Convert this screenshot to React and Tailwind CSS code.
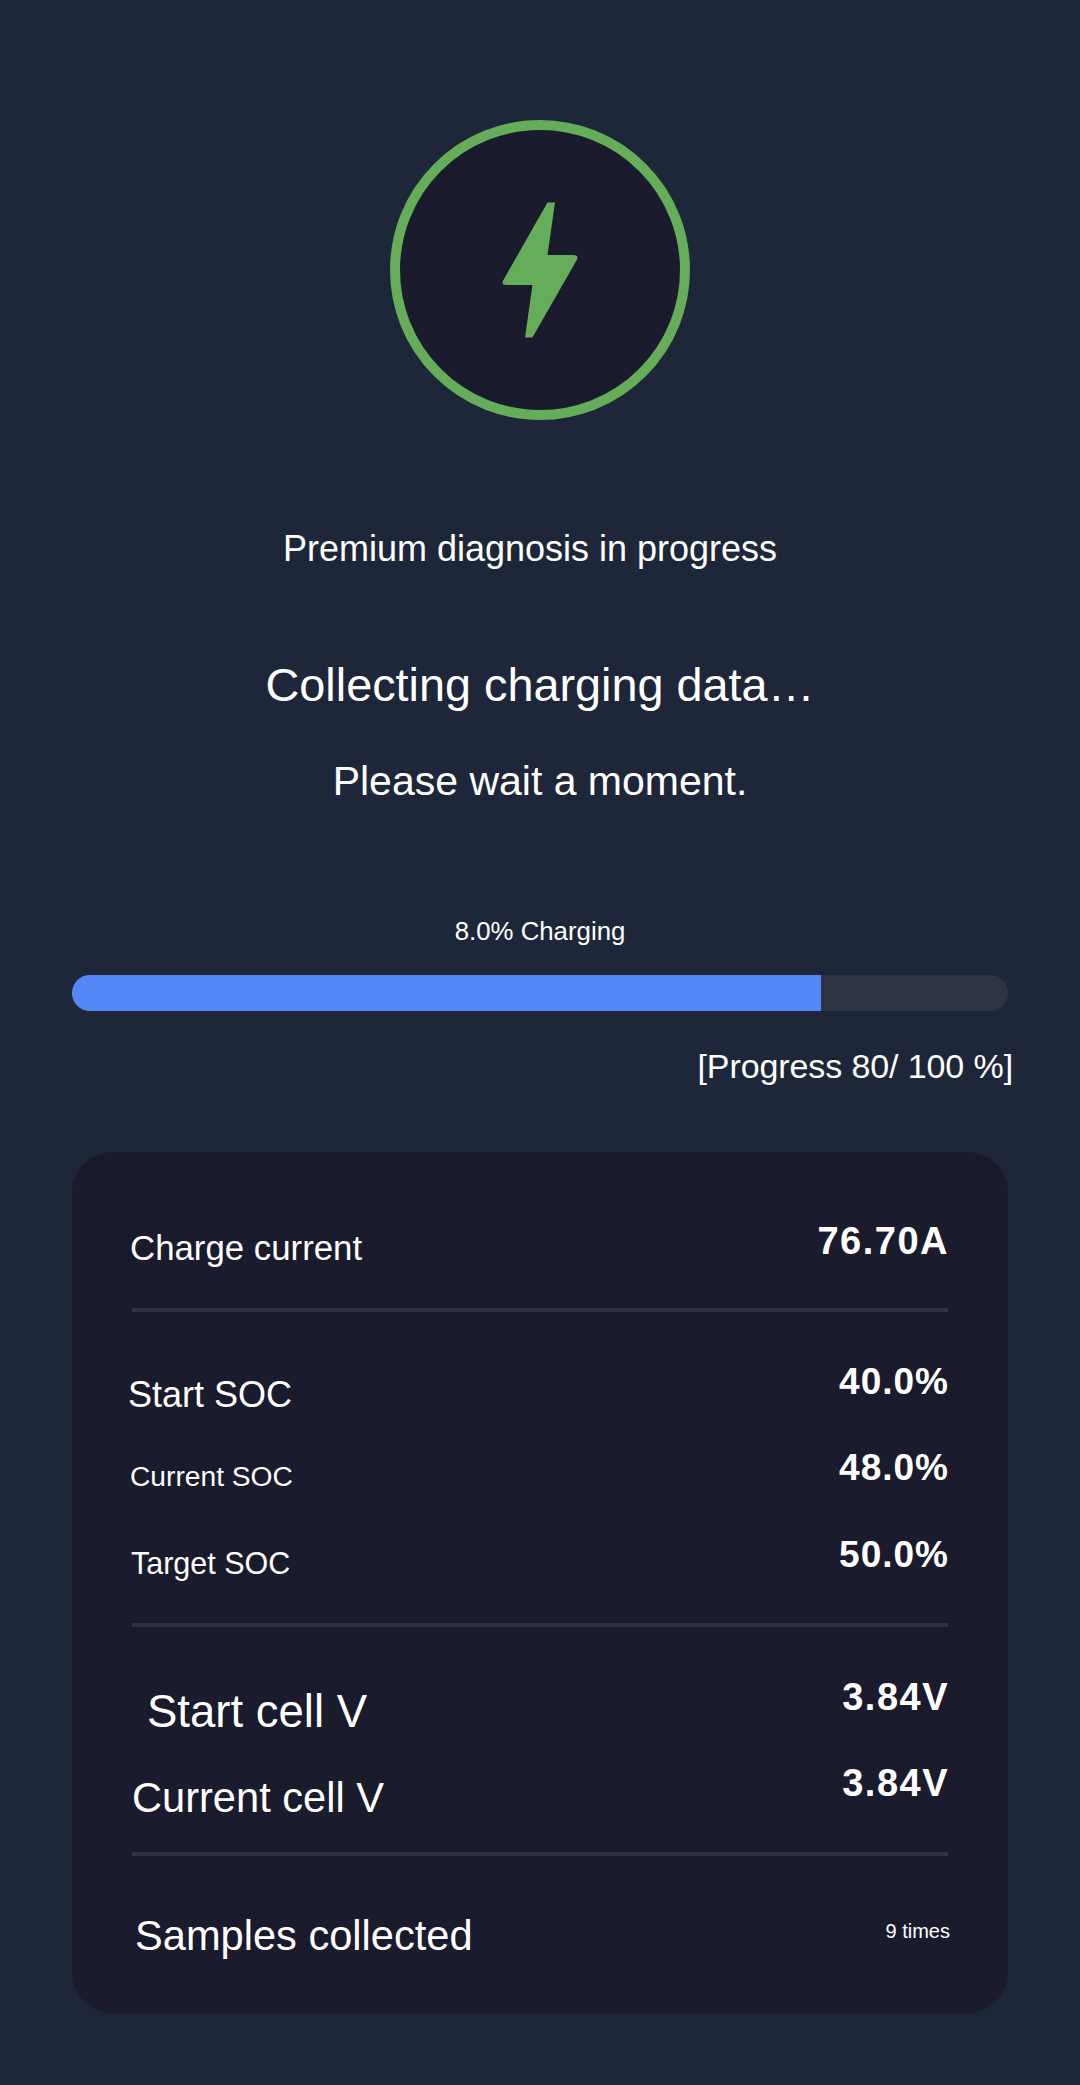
import React from 'react';

const Row = ({ label, value, rowClass, labelClass, valueClass }) => (
  <div className={`flex h-[64px] items-center justify-between ${rowClass}`}>
    <span className={`whitespace-nowrap leading-[1.2] ${labelClass}`}>{label}</span>
    <span className={`whitespace-nowrap leading-[1.2] ${valueClass}`}>{value}</span>
  </div>
);

const Divider = ({ className }) => <div className={`h-[4px] bg-[#302f42] ${className}`} />;

const BIG_VALUE = 'mr-[-1px] text-[38px] font-bold tracking-[1.5px]';
const PCT_VALUE = 'mr-[-1px] text-[37px] font-bold tracking-[1px]';

export default function App() {
  return (
    <div className="min-h-[2085px] bg-[#1e2739] px-[72px] pt-[120px] text-white font-['Liberation_Sans',Arial,sans-serif]">
      {/* Icon */}
      <div className="mx-auto flex h-[300px] w-[300px] items-center justify-center rounded-full border-[10px] border-[#66ad5a] bg-[#1a1b2d]">
        <svg width="180" height="180" viewBox="0 0 24 24" fill="#66ad5a">
          <path d="M11 21h-1l1-7H7.5c-.58 0-.57-.32-.38-.66.19-.34.05-.08.07-.12C8.48 10.94 10.42 7.54 13 3h1l-1 7h3.5c.49 0 .56.33.47.51l-.07.15C12.96 17.55 11 21 11 21z" />
        </svg>
      </div>

      {/* Status text */}
      <p className="mt-[107px] pr-[20px] text-center text-[36px] leading-[44px]">Premium diagnosis in progress</p>
      <p className="mt-[85px] text-center text-[46.8px] leading-[58px]">Collecting charging data…</p>
      <p className="mt-[42px] text-center text-[41px] leading-[50px]">Please wait a moment.</p>

      {/* Progress */}
      <p className="mt-[108px] text-center text-[25.8px] leading-[34px]">8.0% Charging</p>
      <div className="mt-[27px] h-[36px] overflow-hidden rounded-[18px] bg-[#2d3545]">
        <div className="h-full w-[80%] bg-[#5588f7]" />
      </div>
      <p className="mr-[-5px] mt-[35px] text-right text-[34px] tracking-[-0.1px] leading-[40px]">[Progress 80/ 100 %]</p>

      {/* Stats card */}
      <div className="mt-[66px] rounded-[40px] bg-[#1a1b2d] px-[60px] pb-[47px] pt-[60px]">
        <Row label="Charge current" value="76.70A" labelClass="mt-[8px] ml-[-2px] text-[34.8px]" valueClass={`mb-[4px] ${BIG_VALUE}`} />
        <Divider className="mt-[32px]" />

        <Row label="Start SOC" value="40.0%" rowClass="mt-[44px]" labelClass="mt-[14px] ml-[-4px] text-[36px]" valueClass={`mb-[12px] ${PCT_VALUE}`} />
        <Row label="Current SOC" value="48.0%" rowClass="mt-[20px]" labelClass="mt-[9px] ml-[-2px] text-[28.2px]" valueClass={`mb-[7px] ${PCT_VALUE}`} />
        <Row label="Target SOC" value="50.0%" rowClass="mt-[23px]" labelClass="mt-[8px] ml-[-1px] text-[30.5px]" valueClass={`mb-[8px] ${PCT_VALUE}`} />
        <Divider className="mt-[32px]" />

        <Row label="Start cell V" value="3.84V" rowClass="mt-[45px]" labelClass="mt-[16px] ml-[15px] text-[45.5px]" valueClass={`mb-[12px] ${BIG_VALUE}`} />
        <Row label="Current cell V" value="3.84V" rowClass="mt-[22px]" labelClass="mt-[16px] text-[41.6px]" valueClass={`mb-[12px] ${BIG_VALUE}`} />
        <Divider className="mt-[30px]" />

        <Row label="Samples collected" value="9 times" rowClass="mt-[46px]" labelClass="mt-[4px] ml-[3px] text-[41.6px]" valueClass="mb-[6px] mr-[-2px] text-[20px]" />
      </div>
    </div>
  );
}
